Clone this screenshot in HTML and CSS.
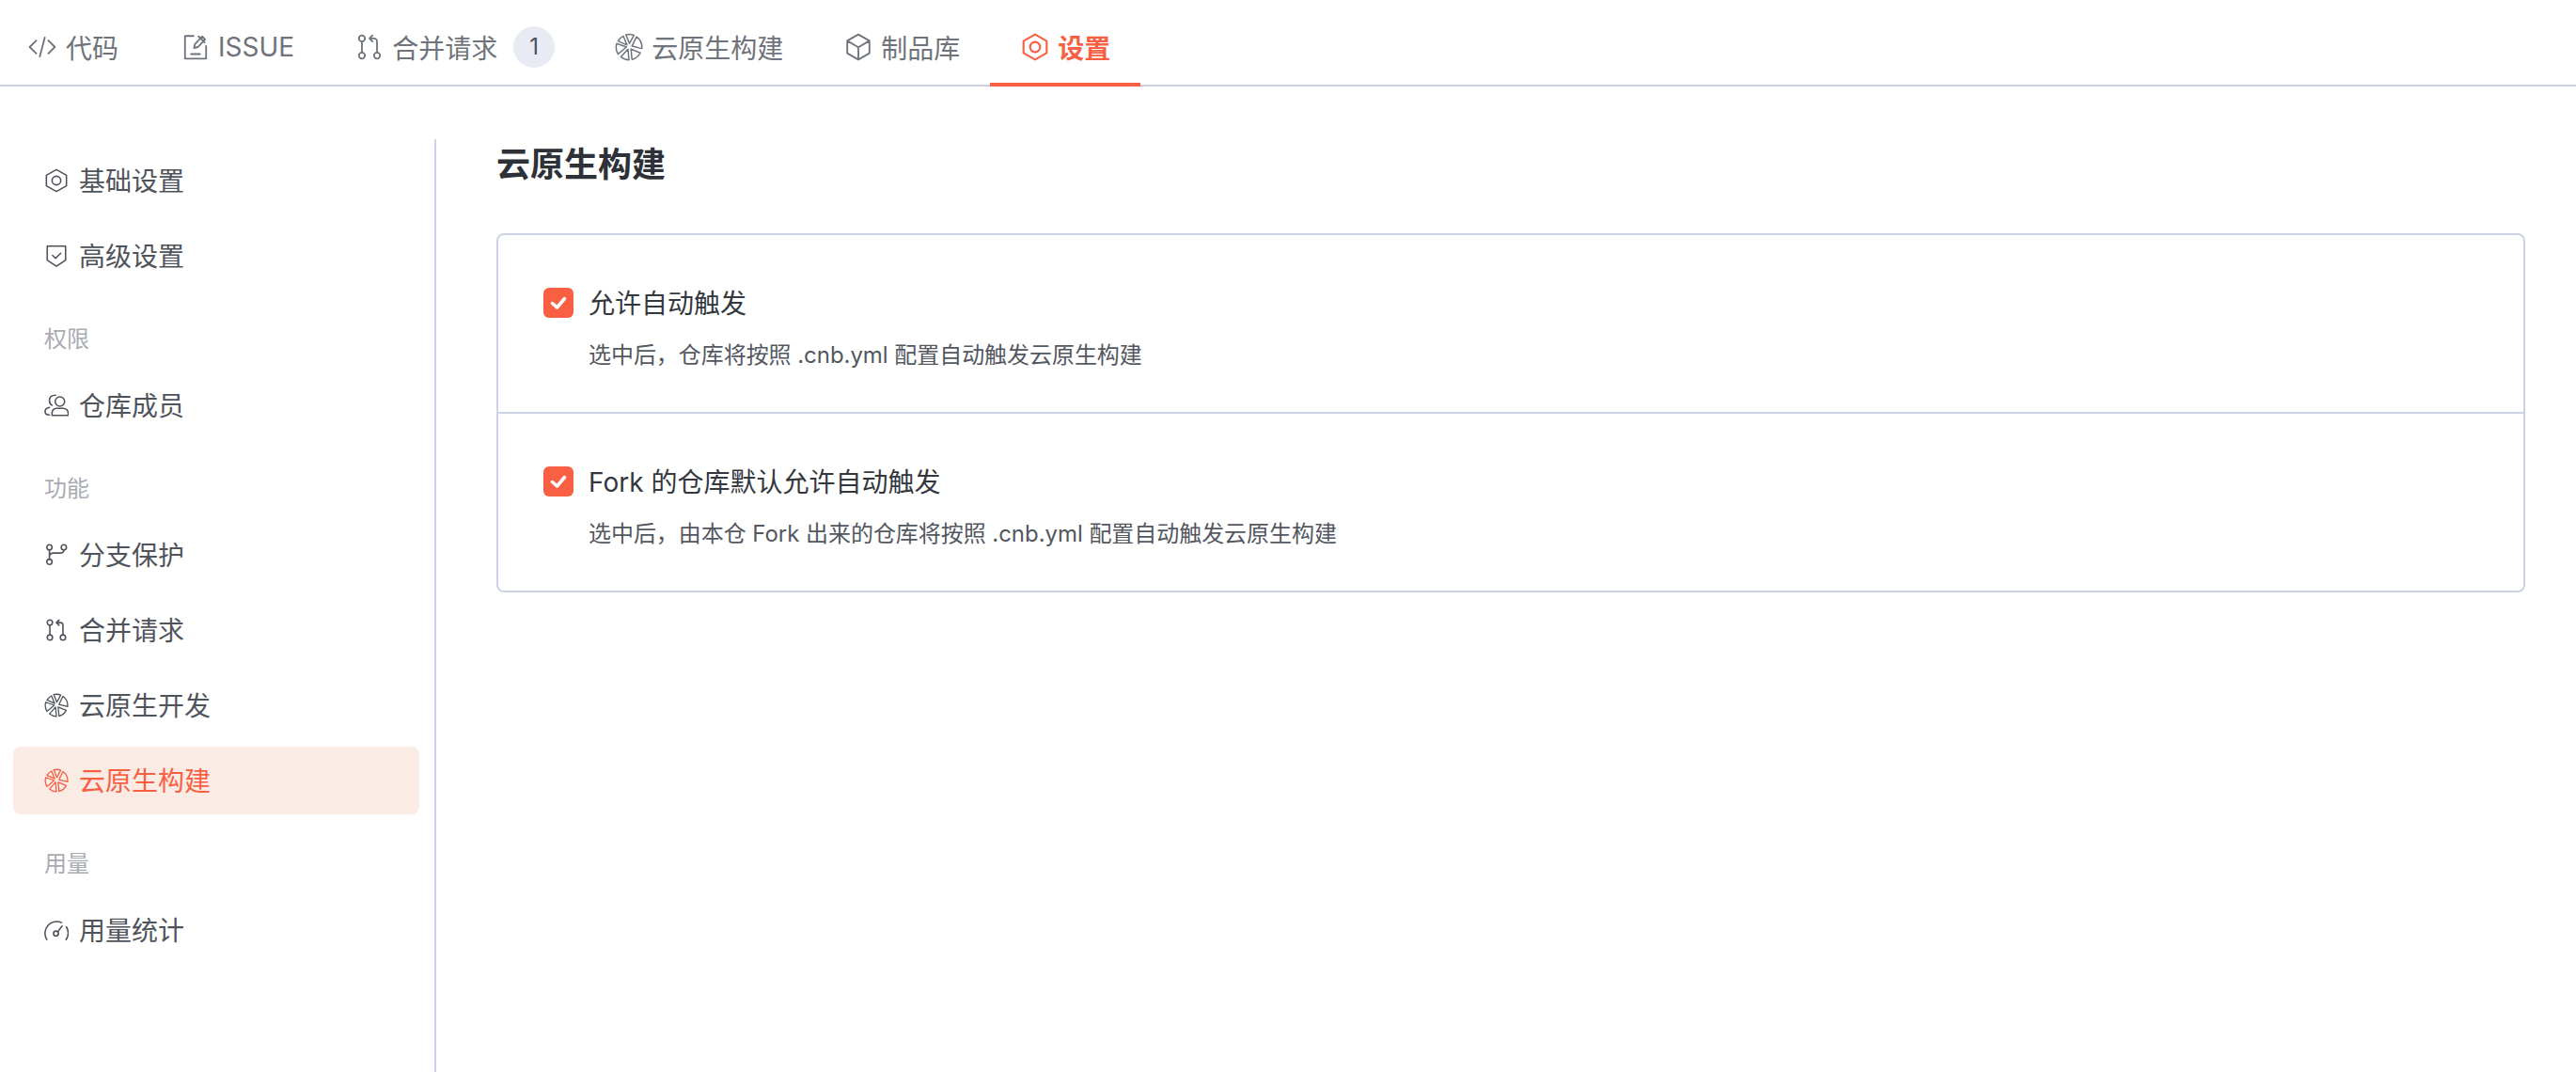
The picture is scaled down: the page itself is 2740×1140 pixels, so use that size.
FILE: index.html
```html
<!DOCTYPE html>
<html lang="zh-CN">
<head>
<meta charset="utf-8">
<title>云原生构建</title>
<link rel="stylesheet" href="styles.css">
</head>
<body>
<svg class="defs" width="0" height="0" aria-hidden="true">
  <symbol id="i-code" viewBox="0 0 28 28"><path d="M8 7.500 1.500 14 8 20.500M20 7.500 26.500 14 20 20.500M16.500 4.500 11.500 23.500"/></symbol>
  <symbol id="i-issue" viewBox="0 0 28 28"><path d="M12 3H3.500v22.500h21V13M9.500 21h9M12.500 15l1-4 7-7.500 3 3-7 7.500zM17 3.500l6 6"/></symbol>
  <symbol id="i-merge" viewBox="0 0 28 28"><circle cx="6.500" cy="5.500" r="3"/><circle cx="6.500" cy="22.500" r="3"/><circle cx="21.500" cy="22.500" r="3"/><path d="M6.500 8.500v11M21.500 19.500V8.500a3 3 0 0 0-3-3H14.500M17 2.500l-3 3 3 3"/></symbol>
  <symbol id="i-cnb" viewBox="0 0 28 28"><path stroke-width="1.400" d="M14.500 10.500 11 1.800A12.800 12.800 0 0 1 19 2.300zM12 12 8.500 3.200A12.800 12.800 0 0 0 3.200 8zM11.500 14 1.800 10.500A12.800 12.800 0 0 0 3.200 21zM13 16 6 23.800A12.800 12.800 0 0 0 14 26.800zM16 16l1 10.400A12.800 12.800 0 0 0 25.200 19.800zM17 13l4.500-9.200A12.800 12.800 0 0 1 26.800 15.500z"/></symbol>
  <symbol id="i-box" viewBox="0 0 28 28"><path d="M14 1.500 25 7.800v12.400L14 26.500 3 20.200V7.800zM3 7.800 14 14.200 25 7.800M14 14.200V26.500"/></symbol>
  <symbol id="i-hex" viewBox="0 0 28 28"><path d="M14 1.500 25.500 8v12L14 26.500 2.500 20V8z"/><circle cx="14" cy="14" r="5"/></symbol>
  <symbol id="i-shield" viewBox="0 0 28 28"><path d="M3.500 3h21v16L14 26 3.500 19z"/><path d="m9.500 13.500 3.500 3.500 6-6"/></symbol>
  <symbol id="i-user" viewBox="0 0 28 28"><circle cx="18" cy="9.700" r="5.400"/><path d="M9 25.500v-3a5 5 0 0 1 5-5h8a5.500 5.500 0 0 1 5.500 5.500v2.500zM13 2.500Q6 2.500 6 8.500 6 12.500 9 14M6 16.500Q1 17.500 1 21 1 25 6 25"/></symbol>
  <symbol id="i-branch" viewBox="0 0 28 28"><circle cx="6" cy="5.500" r="3"/><circle cx="6" cy="22" r="3"/><circle cx="22.500" cy="5.500" r="3"/><path d="M6 8.500V19M6 16q0-4 5-4h7q4.500 0 4.500-3.500"/></symbol>
  <symbol id="i-gauge" viewBox="0 0 28 28"><path d="M3 25A13.500 13.500 0 0 1 20 5.500M25.500 10.500A13.500 13.500 0 0 1 25 25"/><circle cx="13.500" cy="18" r="2.800"/><path d="m15.500 16 5-6.500"/></symbol>
  <symbol id="i-check" viewBox="0 0 32 32"><path d="m9.500 16.500 5 4.500 8-9.500"/></symbol>
</svg>

<nav class="tabs">
  <a class="tab"><svg class="ico"><use href="#i-code"/></svg><span>代码</span></a>
  <a class="tab"><svg class="ico"><use href="#i-issue"/></svg><span>ISSUE</span></a>
  <a class="tab"><svg class="ico"><use href="#i-merge"/></svg><span>合并请求</span><b class="badge">1</b></a>
  <a class="tab"><svg class="ico"><use href="#i-cnb"/></svg><span>云原生构建</span></a>
  <a class="tab"><svg class="ico"><use href="#i-box"/></svg><span>制品库</span></a>
  <a class="tab is-active"><svg class="ico"><use href="#i-hex"/></svg><span>设置</span></a>
</nav>

<div class="layout">
  <aside class="side">
    <a class="item"><svg class="ico"><use href="#i-hex"/></svg><span>基础设置</span></a>
    <a class="item"><svg class="ico"><use href="#i-shield"/></svg><span>高级设置</span></a>
    <div class="group">权限</div>
    <a class="item"><svg class="ico"><use href="#i-user"/></svg><span>仓库成员</span></a>
    <div class="group">功能</div>
    <a class="item"><svg class="ico"><use href="#i-branch"/></svg><span>分支保护</span></a>
    <a class="item"><svg class="ico"><use href="#i-merge"/></svg><span>合并请求</span></a>
    <a class="item"><svg class="ico"><use href="#i-cnb"/></svg><span>云原生开发</span></a>
    <a class="item is-active"><svg class="ico"><use href="#i-cnb"/></svg><span>云原生构建</span></a>
    <div class="group">用量</div>
    <a class="item"><svg class="ico"><use href="#i-gauge"/></svg><span>用量统计</span></a>
  </aside>

  <main class="main">
    <h1 class="title">云原生构建</h1>
    <section class="card">
      <div class="row">
        <div class="opt"><span class="box"><svg class="tick"><use href="#i-check"/></svg></span><span class="opt-text">允许自动触发</span></div>
        <p class="desc">选中后，仓库将按照 .cnb.yml 配置自动触发云原生构建</p>
      </div>
      <div class="row">
        <div class="opt"><span class="box"><svg class="tick"><use href="#i-check"/></svg></span><span class="opt-text">Fork 的仓库默认允许自动触发</span></div>
        <p class="desc">选中后，由本仓 Fork 出来的仓库将按照 .cnb.yml 配置自动触发云原生构建</p>
      </div>
    </section>
  </main>
</div>
</body>
</html>
```

FILE: styles.css
```css
* { box-sizing: border-box; }
html, body { height: 100%; }
body {
  margin: 0;
  background: #fff;
  overflow: hidden;
  color: #353b45;
  font-family: "Inter", "Noto Sans CJK SC", sans-serif;
}
.defs { position: absolute; }
.ico {
  width: 26px;
  height: 26px;
  flex: none;
  fill: none;
  stroke: currentColor;
  stroke-width: 1.7;
  stroke-linejoin: round;
  stroke-linecap: round;
}

.tabs {
  display: flex;
  height: 92px;
  border-bottom: 2px solid #cdd3e3;
}
.tab {
  display: flex;
  align-items: center;
  gap: 9px;
  height: 92px;
  padding: 7px 32px 0 33px;
  font-size: 28px;
  color: #6f737b;
}
.tab:first-child {
  gap: 10px;
  padding-left: 30px;
  padding-right: 34px;
}
.tab .ico {
  width: 30px;
  height: 30px;
  color: #6f737b;
}
.tab.is-active {
  color: #f95f43;
  font-weight: 700;
  border-bottom: 4px solid #f95f43;
  padding-top: 11px;
}
.tab.is-active .ico { color: #f95f43; stroke-width: 2; }
.badge {
  display: flex;
  align-items: center;
  justify-content: center;
  width: 44px;
  height: 44px;
  margin: 0 -1px 0 8px;
  border-radius: 50%;
  background: #e8ebf4;
  color: #4a5160;
  font-size: 24px;
  font-weight: 400;
}

.layout {
  display: flex;
  height: 1048px;
  padding-top: 56px;
}
.side {
  width: 464px;
  flex: none;
  padding: 8px 16px 0 14px;
  border-right: 2px solid #cdd3e3;
}
.item {
  display: flex;
  align-items: center;
  gap: 11px;
  height: 72px;
  margin-bottom: 8px;
  padding-left: 33px;
  border-radius: 8px;
  font-size: 28px;
  color: #4f535b;
}
.item span { margin-bottom: 2px; }
.item.is-active {
  background: #faebe5;
  color: #f95f43;
}
.group {
  display: flex;
  align-items: center;
  height: 46px;
  margin: 27px 0 14px;
  padding-left: 33px;
  font-size: 24px;
  color: #a8abb1;
}
.main {
  flex: 1;
  padding: 0 54px 0 64px;
}
.title {
  margin: 0 0 56px;
  height: 44px;
  line-height: 54px;
  font-size: 36px;
  font-weight: 700;
  color: #2e3138;
}
.card {
  border: 2px solid #cdd3e3;
  border-radius: 8px;
}
.row {
  height: 188px;
  padding: 52px 48px 0;
}
.row + .row {
  height: 190px;
  border-top: 2px solid #cdd3e3;
}
.opt {
  display: flex;
  align-items: center;
  gap: 16px;
  height: 40px;
  font-size: 28px;
  color: #33373e;
}
.opt-text { margin-bottom: 2px; }
.box {
  width: 32px;
  height: 32px;
  flex: none;
  border-radius: 6px;
  background: #f95f43;
}
.tick {
  display: block;
  width: 32px;
  height: 32px;
  fill: none;
  stroke: #fff;
  stroke-width: 3.500;
  stroke-linecap: round;
  stroke-linejoin: round;
}
.desc {
  margin: 16px 0 0 48px;
  font-size: 24px;
  line-height: 40px;
  letter-spacing: -0.05px;
  color: #53575f;
}
```
